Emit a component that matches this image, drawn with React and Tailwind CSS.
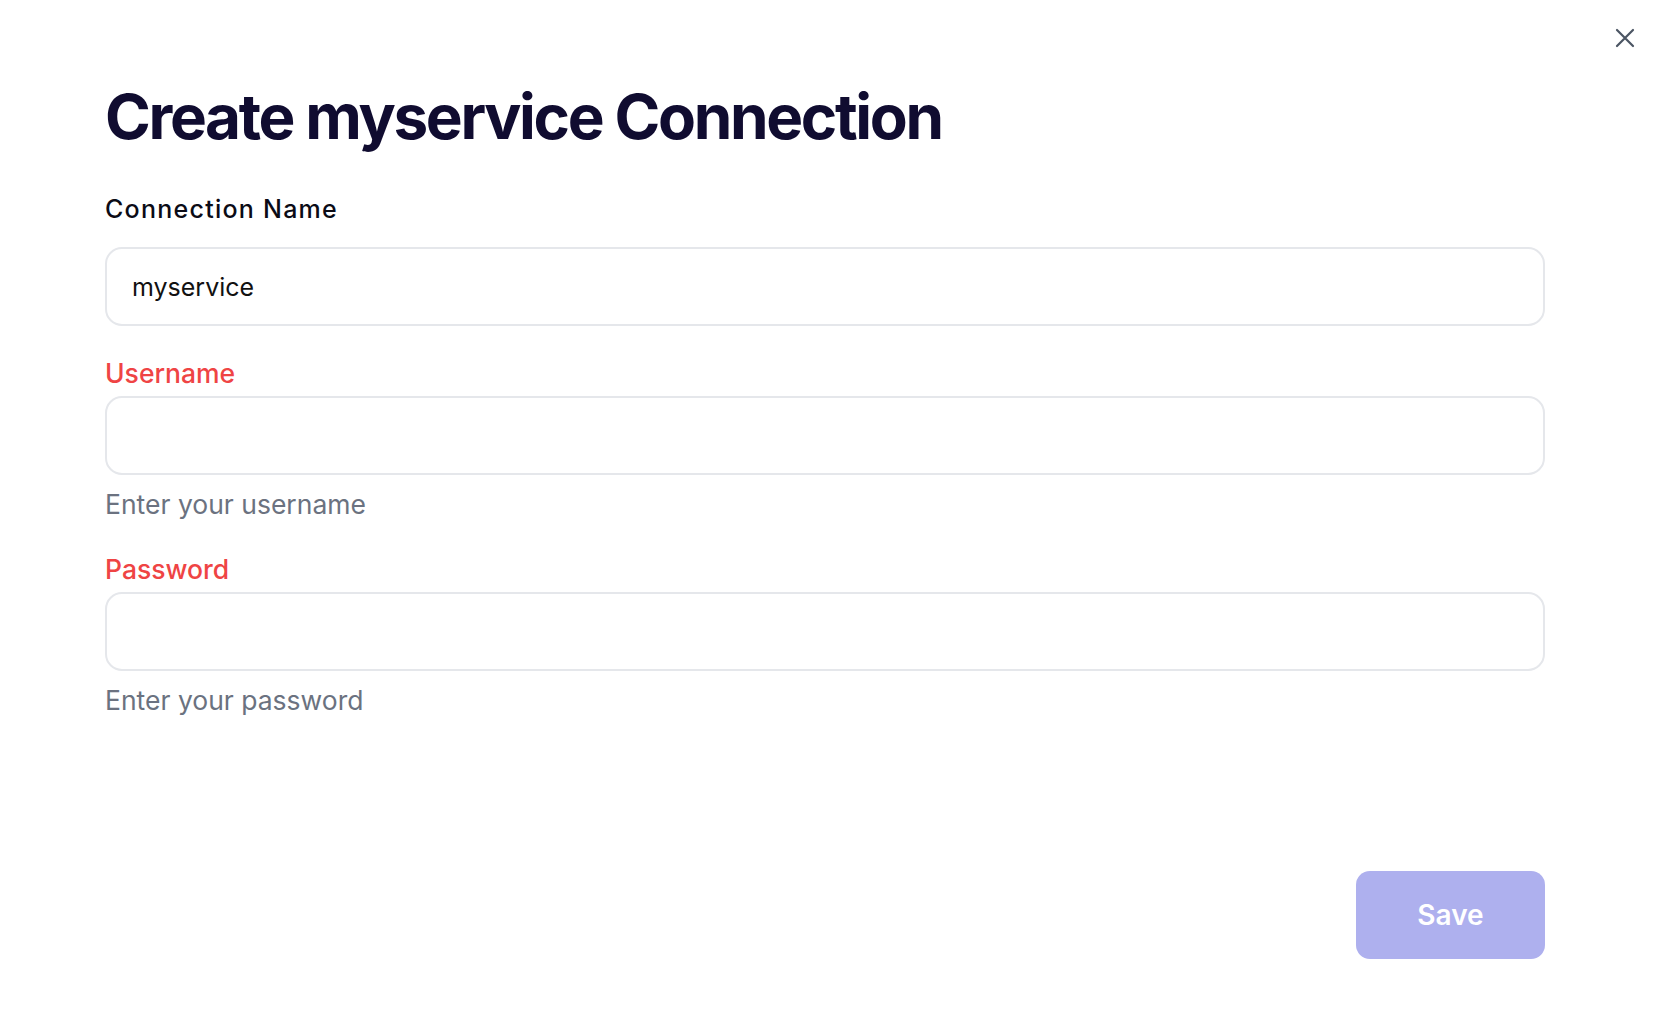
import React from 'react';

function Field({ label, hint }) {
  return (
    <div className="flex flex-col">
      <label className="text-[26.5px] leading-[32px] font-medium text-[#ef4444]">{label}</label>
      <input
        readOnly
        value=""
        className="mt-[7px] h-[79px] w-full rounded-[17px] border-2 border-[#e5e7eb] bg-white px-[25px] text-[25px] text-[#111111] outline-none"
      />
      <p className="mt-[13px] text-[26.5px] leading-[32px] text-[#6b7280]">{hint}</p>
    </div>
  );
}

export default function App() {
  return (
    <div className="relative min-h-[1023px] w-full bg-white" style={{ fontFamily: 'Inter, "Liberation Sans", sans-serif' }}>
      <button className="absolute right-[26px] top-[28px] text-[#4b5563]" aria-label="Close">
        <svg width="20" height="20" viewBox="0 0 20 20" fill="none" stroke="currentColor" strokeWidth="2.2" strokeLinecap="round">
          <path d="M2 2L18 18M18 2L2 18" />
        </svg>
      </button>

      <div className="ml-[105px] w-[1440px] pt-[79px]">
        <h1 className="text-[62px] leading-[76px] font-bold tracking-[-0.038em] text-[#100c30]">
          Create myservice Connection
        </h1>

        <div className="mt-[38px] flex flex-col">
          <label className="text-[25px] leading-[32px] font-medium tracking-[0.05em] text-[#0b0b16]">
            Connection Name
          </label>
          <input
            readOnly
            value="myservice"
            className="mt-[22px] h-[79px] w-full rounded-[17px] border-2 border-[#e5e7eb] bg-white px-[25px] text-[25px] text-[#111111] outline-none"
          />
        </div>

        <div className="mt-[31px] flex flex-col gap-[33px]">
          <Field label="Username" hint="Enter your username" />
          <Field label="Password" hint="Enter your password" />
        </div>

        <div className="mt-[155px] flex justify-end">
          <button className="h-[88px] w-[189px] rounded-[14px] bg-[#aeb0ee] text-[28px] font-semibold text-white">
            Save
          </button>
        </div>
      </div>
    </div>
  );
}
